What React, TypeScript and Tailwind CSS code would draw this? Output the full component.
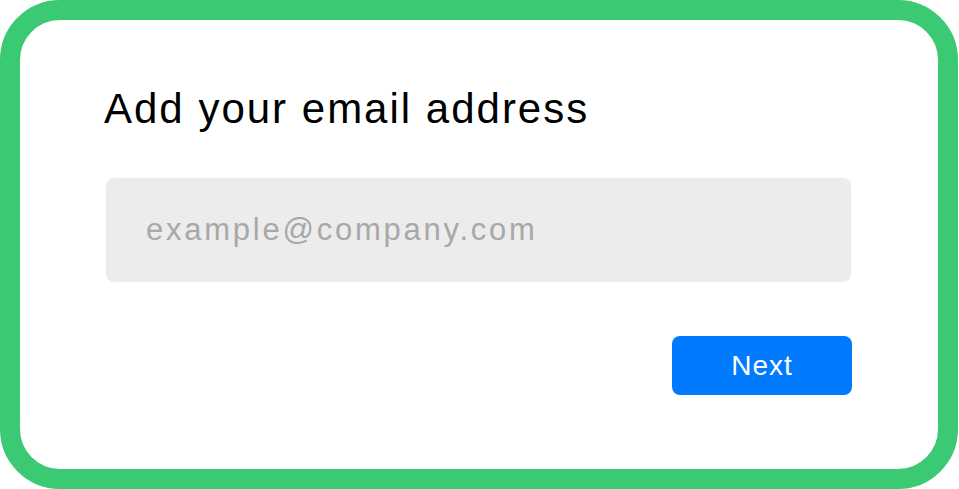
import React from 'react';

const App: React.FC = () => {
  return (
    <div className="w-[959px] h-[489px] bg-white font-['Liberation_Sans',Arial,sans-serif]">
      <div className="w-[958px] h-[489px] border-[20px] border-[#3bca73] rounded-[60px] bg-white pl-[84px] pr-[86px] pt-[61px]">
        <h1 className="text-[42px] leading-[56px] tracking-[2px] text-black">Add your email address</h1>
        <input
          type="email"
          placeholder="example@company.com"
          className="mt-[41px] ml-[2px] w-[745px] h-[104px] rounded-[8px] bg-[#ececec] px-[40px] text-[31px] tracking-[2.75px] text-black placeholder:text-[#a8a8a8] outline-none"
        />
        <div className="flex justify-end mt-[54px]">
          <button className="w-[180px] h-[59px] rounded-[8px] bg-[#007aff] text-white text-[28px] tracking-[1px]">
            Next
          </button>
        </div>
      </div>
    </div>
  );
};

export default App;
